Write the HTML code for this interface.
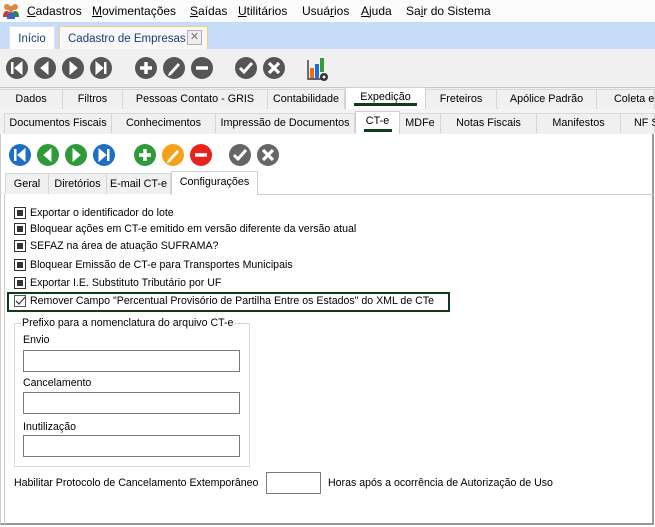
<!DOCTYPE html>
<html><head><meta charset="utf-8"><style>
*{margin:0;padding:0;box-sizing:border-box}
body{width:655px;height:527px;overflow:hidden;background:#fff;font-family:"Liberation Sans",Arial,sans-serif;font-size:10.6px;color:#000;position:relative}
.a{position:absolute}
.menu span{position:absolute;top:4px;font-size:12px}
.tab{position:absolute;height:20px;border-right:1px solid #d6d6d6;text-align:center;line-height:19px;font-size:10.8px;background:#f0f0f0;border-top:1px solid #d9d9d9;white-space:nowrap}
.sel{background:#fff;border:1px solid #d0d0d0;border-bottom:none}
.cb{position:absolute;left:14px;width:12px;height:12px;border:1px solid #333;background:#fff}
.cb::after{content:"";position:absolute;left:2px;top:2px;width:6px;height:6px;background:#333}
.lbl{position:absolute;left:30px;font-size:10.6px}
.t{position:absolute;font-size:10.6px}
.inp{position:absolute;border:1px solid #7a7a7a;background:#fff}
</style></head><body>
<div class="a" style="left:0;top:0;width:655px;height:22px;background:#fbfbfb"></div>
<svg class="a" style="left:2px;top:2px" width="18" height="18" viewBox="0 0 18 18">
<circle cx="5" cy="5" r="3" fill="#e08a3a"/><circle cx="13" cy="5" r="3" fill="#e08a3a"/><circle cx="9" cy="7" r="3" fill="#d9873a"/>
<path d="M1 15 Q1 9 5 9 Q8 9 8 15Z" fill="#d23a2a"/><path d="M10 15 Q10 9 13 9 Q17 9 17 15Z" fill="#2e8a3a"/><path d="M5 17 Q5 10 9 10 Q13 10 13 17Z" fill="#3a64c8"/></svg>
<div class="menu">
<span style="left:27px"><u>C</u>adastros</span>
<span style="left:92px"><u>M</u>ovimentações</span>
<span style="left:190px"><u>S</u>aídas</span>
<span style="left:238px"><u>U</u>tilitários</span>
<span style="left:302px">Usuá<u>r</u>ios</span>
<span style="left:361px"><u>A</u>juda</span>
<span style="left:406px">Sa<u>i</u>r do Sistema</span>
</div>
<div class="a" style="left:0;top:22px;width:655px;height:27px;background:#c6dcf8"></div>
<div class="a" style="left:9px;top:26px;width:46px;height:23px;background:#fff;border:1px solid #d8e4f2;border-bottom:none;font-size:11.5px;text-align:center;line-height:24px;color:#1a3d78">Início</div>
<div class="a" style="left:59px;top:26px;width:149px;height:23px;background:#f8f8f8;border:1px solid #f0d080;border-bottom:none;font-size:11.5px;line-height:24px;color:#1a3d78;padding-left:8px">Cadastro de Empresas</div>
<div class="a" style="left:187px;top:30px;width:15px;height:15px;border:1px solid #b0b0b0;background:#eee;font-size:11px;line-height:13px;text-align:center;color:#777">✕</div>
<div class="a" style="left:0;top:49px;width:655px;height:39px;background:#f0f0f0;border-bottom:1px solid #c8c8c8"></div>
<svg class="a" style="left:0;top:49px" width="340" height="39">
<g fill="#555">
<circle cx="17" cy="19" r="11"/><circle cx="45" cy="19" r="11"/><circle cx="73" cy="19" r="11"/><circle cx="101" cy="19" r="11"/>
<circle cx="146" cy="19" r="11"/><circle cx="174" cy="19" r="11"/><circle cx="202" cy="19" r="11"/>
<circle cx="246" cy="19" r="11"/><circle cx="274" cy="19" r="11"/></g>
<g fill="#fff" stroke="#fff">
<rect x="11" y="13" width="2.5" height="12" stroke="none"/><path d="M22 13 L15 19 L22 25Z"/>
<path d="M48 13 L41 19 L48 25Z"/><path d="M70 13 L77 19 L70 25Z"/>
<path d="M96 13 L103 19 L96 25Z"/><rect x="104" y="13" width="2.5" height="12" stroke="none"/>
<path d="M146 13V25M140 19H152" stroke-width="3.5" fill="none"/>
<path d="M169 24 L178 14 L180 16 L171 26 L168 27Z" stroke="none"/>
<path d="M196 19H208" stroke-width="3.5"/>
<path d="M240 19 L244 23 L252 14" stroke-width="3" fill="none"/>
<path d="M269 14L279 24M279 14L269 24" stroke-width="3.2"/></g>
<path d="M308 11V30H325" stroke="#333" fill="none" stroke-width="1.4"/>
<rect x="310" y="19" width="4" height="10" fill="#f26a1b"/><rect x="315" y="15" width="4" height="14" fill="#1f6fd0"/><rect x="320" y="9" width="4" height="14" fill="#2e9e3e"/>
<circle cx="324" cy="28" r="4" fill="#333"/><circle cx="324" cy="28" r="1.5" fill="#f0f0f0"/>
</svg>
<div class="a" style="left:0;top:88px;width:655px;height:46px;background:#f0f0f0"></div>
<div class="tab" style="left:0;top:89px;width:63px">Dados</div>
<div class="tab" style="left:63px;top:89px;width:60px">Filtros</div>
<div class="tab" style="left:123px;top:89px;width:145px">Pessoas Contato - GRIS</div>
<div class="tab" style="left:268px;top:89px;width:77px">Contabilidade</div>
<div class="tab sel" style="left:345px;top:87px;width:81px;height:22px">Expedição<div class="a" style="left:8px;top:15px;width:63px;height:3px;background:#0f3b1a"></div></div>
<div class="tab" style="left:426px;top:89px;width:71px">Freteiros</div>
<div class="tab" style="left:497px;top:89px;width:100px">Apólice Padrão</div>
<div class="tab" style="left:597px;top:89px;width:58px;text-align:left;padding-left:17px">Coleta e</div>
<div class="a" style="left:0;top:109px;width:655px;height:4px;background:#f4f4f4"></div>
<div class="tab" style="left:4px;top:113px;width:108px;border-left:1px solid #d6d6d6">Documentos Fiscais</div>
<div class="tab" style="left:112px;top:113px;width:104px">Conhecimentos</div>
<div class="tab" style="left:216px;top:113px;width:139px">Impressão de Documentos</div>
<div class="tab sel" style="left:355px;top:111px;width:45px;height:23px">CT-e<div class="a" style="left:8px;top:17px;width:28px;height:3px;background:#0f3b1a"></div></div>
<div class="tab" style="left:400px;top:113px;width:41px">MDFe</div>
<div class="tab" style="left:441px;top:113px;width:96px">Notas Fiscais</div>
<div class="tab" style="left:537px;top:113px;width:84px">Manifestos</div>
<div class="tab" style="left:621px;top:113px;width:34px;text-align:left;padding-left:13px">NF S</div>
<div class="a" style="left:0;top:134px;width:654px;height:391px;background:#fff;border-left:1px solid #ccc;border-right:2px solid #999;border-bottom:2px solid #999"></div>
<svg class="a" style="left:0;top:143px" width="290" height="24">
<circle cx="20" cy="12" r="11" fill="#1e6fc4"/><circle cx="48" cy="12" r="11" fill="#2e9a3a"/><circle cx="76" cy="12" r="11" fill="#2e9a3a"/><circle cx="104" cy="12" r="11" fill="#1e6fc4"/>
<circle cx="145" cy="12" r="11" fill="#2e9a3a"/><circle cx="173" cy="12" r="11" fill="#f4a21c"/><circle cx="201" cy="12" r="11" fill="#e8221c"/>
<circle cx="240" cy="12" r="11" fill="#666"/><circle cx="268" cy="12" r="11" fill="#666"/>
<g fill="#fff" stroke="#fff">
<rect x="14" y="6" width="2.5" height="12" stroke="none"/><path d="M25 6 L18 12 L25 18Z"/>
<path d="M51 6 L44 12 L51 18Z"/><path d="M73 6 L80 12 L73 18Z"/>
<path d="M99 6 L106 12 L99 18Z"/><rect x="107" y="6" width="2.5" height="12" stroke="none"/>
<path d="M145 6V18M139 12H151" stroke-width="3.5" fill="none"/>
<path d="M168 17 L177 7 L179 9 L170 19 L167 20Z" stroke="none"/>
<path d="M195 12H207" stroke-width="3.5"/>
<path d="M234 12 L238 16 L246 7" stroke-width="3" fill="none"/>
<path d="M263 7L273 17M273 7L263 17" stroke-width="3.2"/></g></svg>
<div class="tab" style="left:5px;top:173px;width:44px;height:21px;border-left:1px solid #d6d6d6;line-height:20px">Geral</div>
<div class="tab" style="left:49px;top:173px;width:58px;height:21px;line-height:20px">Diretórios</div>
<div class="tab" style="left:107px;top:173px;width:64px;height:21px;line-height:20px">E-mail CT-e</div>
<div class="tab sel" style="left:171px;top:171px;width:87px;height:24px;line-height:20px">Configurações</div>
<div class="a" style="left:4px;top:194px;width:1px;height:330px;background:#ccc"></div>
<div class="a" style="left:258px;top:194px;width:396px;height:1px;background:#ccc"></div>
<div class="cb" style="top:207px"></div><div class="lbl" style="top:207px">Exportar o identificador do lote</div>
<div class="cb" style="top:223px"></div><div class="lbl" style="top:223px">Bloquear ações em CT-e emitido em versão diferente da versão atual</div>
<div class="cb" style="top:240px"></div><div class="lbl" style="top:240px">SEFAZ na área de atuação SUFRAMA?</div>
<div class="cb" style="top:259px"></div><div class="lbl" style="top:259px">Bloquear Emissão de CT-e para Transportes Municipais</div>
<div class="cb" style="top:277px"></div><div class="lbl" style="top:277px">Exportar I.E. Substituto Tributário por UF</div>
<div class="a" style="left:7px;top:292px;width:443px;height:20px;border:2px solid #0f3b1a"></div>
<div class="a" style="left:14px;top:295px;width:12px;height:12px;border:1px solid #555;background:#fff"><svg width="10" height="10" style="position:absolute;left:0;top:0"><path d="M1 5 L4 8 L10 1" stroke="#444" stroke-width="1.3" fill="none"/></svg></div>
<div class="lbl" style="top:295px">Remover Campo "Percentual Provisório de Partilha Entre os Estados" do XML de CTe</div>
<div class="a" style="left:14px;top:323px;width:236px;height:144px;border:1px solid #d8d8d8"></div>
<div class="t" style="left:21px;top:317px;background:#fff;padding:0 1px">Prefixo para a nomenclatura do arquivo CT-e</div>
<div class="t" style="left:23px;top:334px">Envio</div>
<div class="inp" style="left:23px;top:350px;width:217px;height:22px"></div>
<div class="t" style="left:23px;top:377px">Cancelamento</div>
<div class="inp" style="left:23px;top:392px;width:217px;height:22px"></div>
<div class="t" style="left:23px;top:421px">Inutilização</div>
<div class="inp" style="left:23px;top:435px;width:217px;height:22px"></div>
<div class="t" style="left:14px;top:477px">Habilitar Protocolo de Cancelamento Extemporâneo</div>
<div class="inp" style="left:266px;top:472px;width:55px;height:22px"></div>
<div class="t" style="left:328px;top:477px">Horas após a ocorrência de Autorização de Uso</div>
</body></html>
